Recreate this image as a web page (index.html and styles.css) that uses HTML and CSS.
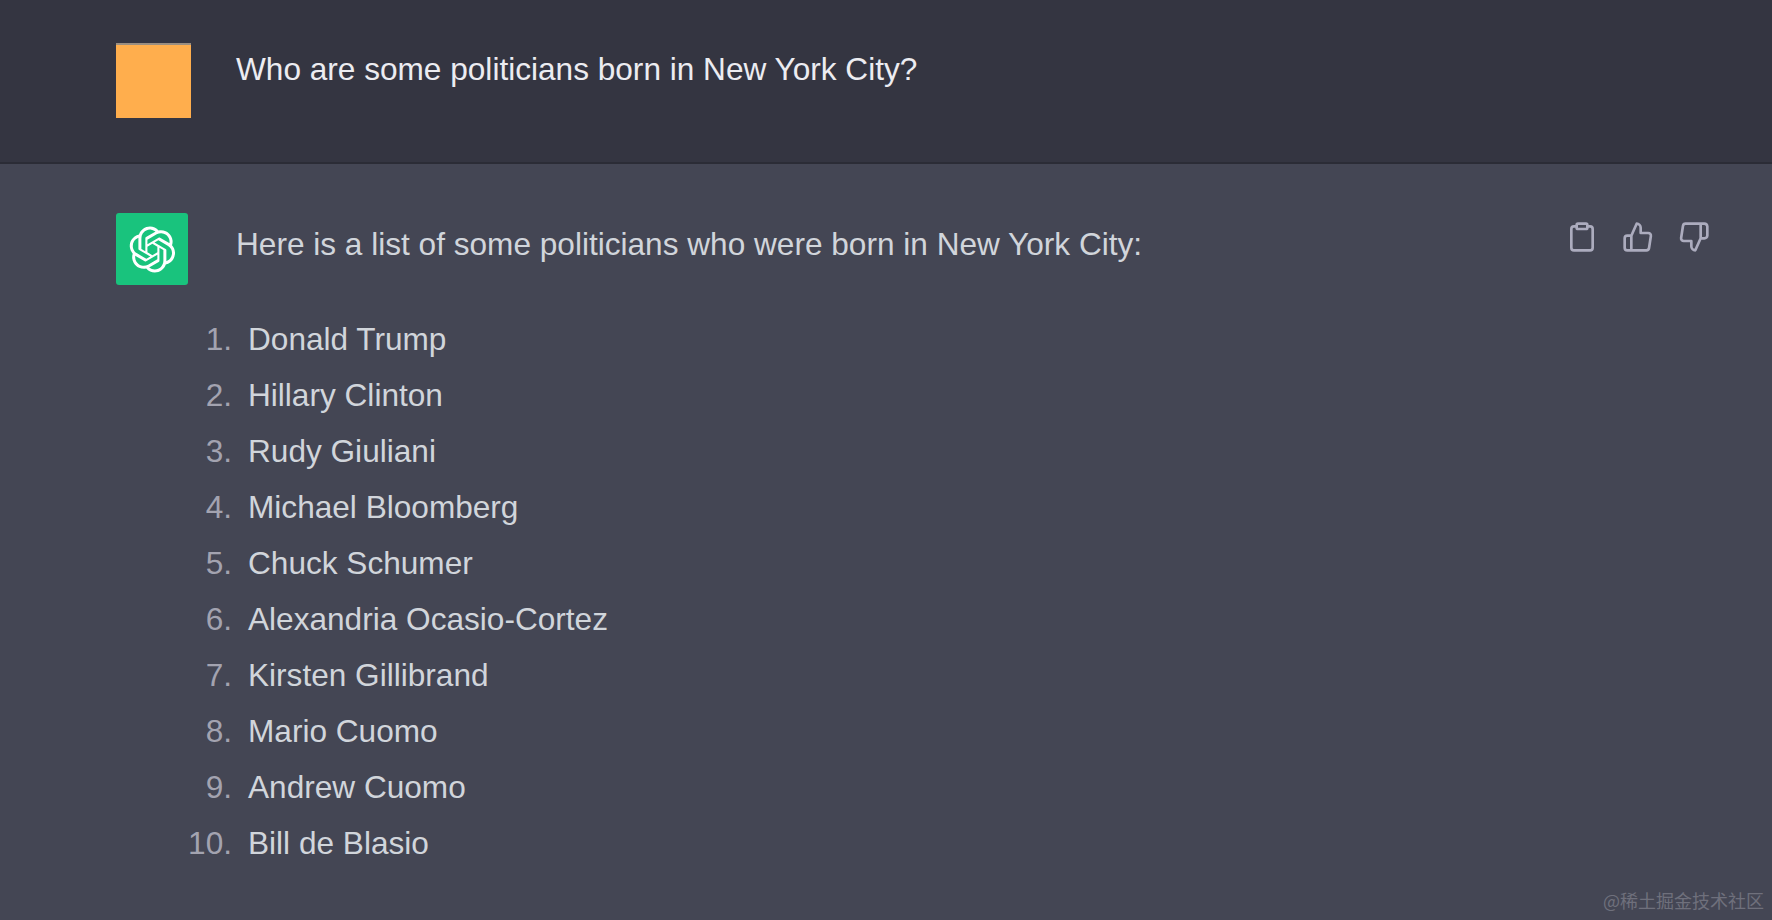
FILE: index.html
```html
<!DOCTYPE html>
<html lang="en">
<head>
    <meta charset="UTF-8">
    <title>Chat</title>
    <link rel="stylesheet" href="styles.css">
</head>
<body>
    <div class="message user-message">
        <div class="user-avatar"></div>
        <div class="question">Who are some politicians born in New York City?</div>
    </div>

    <div class="message bot-message">
        <div class="bot-avatar">
            <svg class="bot-logo" viewBox="0 0 41 41" fill="currentColor">
                <path d="M37.5324 16.8707C37.9808 15.5241 38.1363 14.0974 37.9886 12.6859C37.8409 11.2744 37.3934 9.91076 36.676 8.68622C35.6126 6.83404 33.9882 5.3676 32.0373 4.4985C30.0864 3.62941 27.9098 3.40259 25.8215 3.85078C24.8796 2.7893 23.7219 1.94125 22.4257 1.36341C21.1295 0.785575 19.7249 0.491269 18.3058 0.500197C16.1708 0.495044 14.0893 1.16803 12.3614 2.42214C10.6335 3.67624 9.34853 5.44666 8.6917 7.47815C7.30085 7.76286 5.98686 8.3414 4.8377 9.17505C3.68854 10.0087 2.73073 11.0782 2.02839 12.312C0.956464 14.1591 0.498905 16.2988 0.721698 18.4228C0.944492 20.5467 1.83612 22.5449 3.268 24.1293C2.81966 25.4759 2.66413 26.9026 2.81182 28.3141C2.95951 29.7256 3.40701 31.0892 4.12437 32.3138C5.18791 34.1659 6.8123 35.6322 8.76321 36.5013C10.7141 37.3704 12.8907 37.5973 14.9789 37.1492C15.9208 38.2107 17.0786 39.0587 18.3747 39.6366C19.6709 40.2144 21.0755 40.5087 22.4946 40.4998C24.6307 40.5054 26.7133 39.8321 28.4418 38.5772C30.1704 37.3223 31.4556 35.5506 32.1119 33.5179C33.5027 33.2332 34.8167 32.6547 35.9659 31.821C37.115 30.9874 38.0728 29.9178 38.7752 28.684C39.8458 26.8371 40.3023 24.6979 40.0789 22.5748C39.8556 20.4517 38.9639 18.4544 37.5324 16.8707ZM22.4978 37.8849C20.7443 37.8874 19.0459 37.2733 17.6994 36.1501C17.7601 36.117 17.8666 36.0586 17.936 36.0161L25.9004 31.4156C26.1003 31.3019 26.2663 31.137 26.3813 30.9378C26.4964 30.7386 26.5563 30.5124 26.5549 30.2825V19.0542L29.9213 20.998C29.9389 21.0068 29.9541 21.0198 29.9656 21.0359C29.977 21.052 29.9842 21.0707 29.9867 21.0902V30.3889C29.9842 32.375 29.1946 34.2791 27.7909 35.6841C26.3872 37.0892 24.4838 37.8806 22.4978 37.8849ZM6.39227 31.0064C5.51397 29.4888 5.19742 27.7107 5.49804 25.9832C5.55718 26.0187 5.66048 26.0818 5.73461 26.1244L13.699 30.7248C13.8975 30.8408 14.1233 30.902 14.3532 30.902C14.583 30.902 14.8088 30.8408 15.0073 30.7248L24.731 25.1103V28.9979C24.7321 29.0177 24.7283 29.0376 24.7199 29.0556C24.7115 29.0736 24.6988 29.0893 24.6829 29.1012L16.6317 33.7497C14.9096 34.7416 12.8643 35.0097 10.9447 34.4954C9.02506 33.9811 7.38785 32.7263 6.39227 31.0064ZM4.29707 13.6194C5.17156 12.0998 6.55279 10.9364 8.19885 10.3327C8.19885 10.4013 8.19491 10.5228 8.19491 10.6071V19.808C8.19351 20.0378 8.25334 20.2638 8.36823 20.4629C8.48312 20.6619 8.64893 20.8267 8.84863 20.9404L18.5723 26.5542L15.206 28.4979C15.1894 28.5089 15.1703 28.5155 15.1505 28.5173C15.1307 28.5191 15.1107 28.516 15.0924 28.5082L7.04046 23.8557C5.32135 22.8601 4.06716 21.2235 3.55289 19.3046C3.03862 17.3858 3.30624 15.3413 4.29707 13.6194ZM31.955 20.0556L22.2312 14.4411L25.5976 12.4981C25.6142 12.4872 25.6333 12.4805 25.6531 12.4787C25.6729 12.4769 25.6928 12.4801 25.7111 12.4879L33.7631 17.1364C34.9967 17.849 36.0017 18.8982 36.6606 20.1613C37.3194 21.4244 37.6047 22.849 37.4832 24.2684C37.3617 25.6878 36.8382 27.0432 35.9743 28.1759C35.1103 29.3086 33.9415 30.1717 32.6047 30.6641C32.6047 30.5947 32.6047 30.4733 32.6047 30.3889V21.188C32.6066 20.9586 32.5474 20.7328 32.4332 20.5338C32.319 20.3348 32.154 20.1698 31.955 20.0556ZM35.3055 15.0128C35.2464 14.9765 35.1431 14.9142 35.069 14.8717L27.1045 10.2712C26.906 10.1554 26.6803 10.0943 26.4504 10.0943C26.2206 10.0943 25.9948 10.1554 25.7963 10.2712L16.0726 15.8858V11.9982C16.0715 11.9783 16.0753 11.9585 16.0837 11.9405C16.0921 11.9225 16.1048 11.9068 16.1207 11.8949L24.1719 7.25025C25.4053 6.53903 26.8121 6.19376 28.2299 6.25482C29.6477 6.31589 31.0181 6.78077 32.1807 7.59508C33.3433 8.40939 34.2504 9.53945 34.7958 10.8528C35.3412 12.1661 35.5025 13.6089 35.2608 15.0069L35.3055 15.0128ZM14.2424 21.9419L10.8752 19.9981C10.8576 19.9893 10.8423 19.9763 10.8309 19.9602C10.8195 19.9441 10.8122 19.9254 10.8098 19.9058V10.6071C10.8107 9.18295 11.2173 7.78848 11.9819 6.58696C12.7466 5.38544 13.8377 4.42659 15.1275 3.82264C16.4173 3.21869 17.8524 2.99464 19.2649 3.1767C20.6775 3.35876 22.0089 3.93941 23.1034 4.85067C23.0427 4.88379 22.937 4.94215 22.8668 4.98473L14.9024 9.58517C14.7025 9.69878 14.5366 9.86356 14.4215 10.0626C14.3065 10.2616 14.2466 10.4877 14.2479 10.7175L14.2424 21.9419ZM16.071 17.9991L20.4018 15.4978L24.7325 17.9975V22.9985L20.4018 25.4983L16.071 22.9985V17.9991Z"/>
            </svg>
        </div>
        <div class="answer">
            <p class="answer-intro">Here is a list of some politicians who were born in New York City:</p>
            <ol class="answer-list">
                <li>Donald Trump</li>
                <li>Hillary Clinton</li>
                <li>Rudy Giuliani</li>
                <li>Michael Bloomberg</li>
                <li>Chuck Schumer</li>
                <li>Alexandria Ocasio-Cortez</li>
                <li>Kirsten Gillibrand</li>
                <li>Mario Cuomo</li>
                <li>Andrew Cuomo</li>
                <li>Bill de Blasio</li>
            </ol>
        </div>
        <div class="actions">
            <svg class="action-icon" viewBox="0 0 24 24"><path d="M16 4h2a2 2 0 0 1 2 2v14a2 2 0 0 1-2 2H6a2 2 0 0 1-2-2V6a2 2 0 0 1 2-2h2"/><rect x="8" y="2" width="8" height="4" rx="1" ry="1"/></svg>
            <svg class="action-icon" viewBox="0 0 24 24"><path d="M14 9V5a3 3 0 0 0-3-3l-4 9v11h11.28a2 2 0 0 0 2-1.7l1.38-9a2 2 0 0 0-2-2.3zM7 22H4a2 2 0 0 1-2-2v-7a2 2 0 0 1 2-2h3"/></svg>
            <svg class="action-icon" viewBox="0 0 24 24"><path d="M10 15v4a3 3 0 0 0 3 3l4-9V2H5.72a2 2 0 0 0-2 1.7l-1.38 9a2 2 0 0 0 2 2.3zm7-13h2.67A2.31 2.31 0 0 1 22 4v7a2.31 2.31 0 0 1-2.33 2H17"/></svg>
        </div>
    </div>

    <div class="watermark">@稀土掘金技术社区</div>
</body>
</html>
```

FILE: styles.css
```css
html, body {
    height: 100%;
}

body {
    margin: 0;
    display: flex;
    flex-direction: column;
    font-family: 'Liberation Sans', sans-serif;
    font-size: 31.6px;
    background: #444654;
    overflow: hidden;
}

.message {
    display: flex;
    padding-left: 116px;
}

.user-message {
    height: 164px;
    padding-top: 43px;
    box-sizing: border-box;
    background: #343541;
    border-bottom: 2px solid #2b2c36;
    color: #ececf1;
}

.user-avatar {
    width: 75px;
    height: 75px;
    background: #ffae4d;
    border-top: 2px solid #9a8e80;
    box-sizing: border-box;
}

.question {
    margin-left: 45px;
    line-height: 52px;
}

.bot-message {
    flex: 1;
    padding-top: 49px;
    padding-right: 62px;
    color: #d1d5db;
}

.bot-avatar {
    flex: none;
    display: flex;
    align-items: center;
    justify-content: center;
    width: 72px;
    height: 72px;
    background: #19c37d;
    border-radius: 3px;
    color: #fff;
}

.bot-logo {
    width: 47px;
    height: 47px;
}

.answer {
    flex: 1;
    margin-left: 48px;
}

.answer-intro {
    margin: 6px 0 0;
    line-height: 50px;
}

.answer-list {
    list-style: none;
    margin: 42px 0 0 -48px;
    padding: 0;
    counter-reset: item;
}

.answer-list li {
    display: flex;
    height: 56px;
    line-height: 56px;
    counter-increment: item;
}

.answer-list li::before {
    content: counter(item) ".";
    width: 44px;
    margin-right: 16px;
    text-align: right;
    color: #a3a3b0;
}

.actions {
    display: flex;
    gap: 24px;
    margin-top: 8px;
}

.action-icon {
    width: 32px;
    height: 32px;
    fill: none;
    stroke: #acacbe;
    stroke-width: 2;
    stroke-linecap: round;
    stroke-linejoin: round;
}

.watermark {
    position: absolute;
    right: 8px;
    bottom: 7px;
    font-family: 'Noto Sans CJK SC', sans-serif;
    font-size: 18px;
    color: #6f707c;
}
```
